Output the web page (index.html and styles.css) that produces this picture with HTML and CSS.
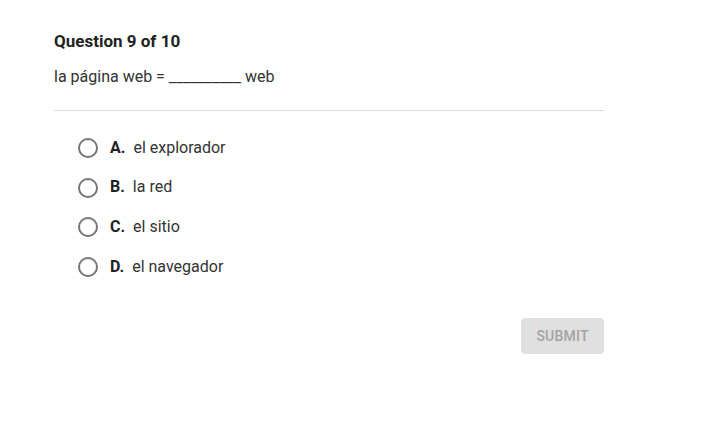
FILE: index.html
```html
<!DOCTYPE html>
<html>
<head>
<meta charset="utf-8">
<link rel="stylesheet" href="styles.css">
</head>
<body>
<div class="quiz">
  <h1 class="title">Question 9 of 10</h1>
  <p class="prompt">la página web = __________ web</p>
  <hr class="divider">
  <ul class="options">
    <li class="option"><span class="radio"></span><span class="letter">A.</span><span class="text">el explorador</span></li>
    <li class="option"><span class="radio"></span><span class="letter">B.</span><span class="text">la red</span></li>
    <li class="option"><span class="radio"></span><span class="letter">C.</span><span class="text">el sitio</span></li>
    <li class="option"><span class="radio"></span><span class="letter">D.</span><span class="text">el navegador</span></li>
  </ul>
  <div class="actions"><button class="submit">SUBMIT</button></div>
</div>
</body>
</html>
```
FILE: styles.css
```css
html, body { margin: 0; padding: 0; background: #fff; }
body { font-family: Roboto, "Liberation Sans", sans-serif; color: #222; }
.quiz { width: 550px; margin-left: 54px; padding-top: 31px; }
.title { margin: 0; font-size: 17px; font-weight: 700; line-height: 21px; color: #222; }
.prompt { margin: 15px 0 0; font-size: 16px; line-height: 20px; color: #333; }
.divider { margin: 23px 0 0; border: 0; border-top: 1px solid #ddd; height: 0; }
.options { list-style: none; margin: 0; padding: 0 0 0 24px; padding-top: 27px; }
.option { display: flex; align-items: center; height: 20px; margin-bottom: 19.7px; font-size: 16px; color: #333; }
.radio { width: 16px; height: 16px; border: 2px solid #757575; border-radius: 50%; margin-right: 12px; flex: none; }
.letter { font-weight: 700; color: #222; margin-right: 8px; margin-top: -2px; }
.text { margin-top: -2px; }
.actions { display: flex; justify-content: flex-end; margin-top: 41px; }
.submit { width: 83px; height: 36px; border: 0; border-radius: 4px; background: #e0e0e0; color: #a3a3a3; font-family: Roboto, "Liberation Sans", sans-serif; font-size: 14px; font-weight: 500; letter-spacing: 0.2px; padding: 0; }
```
